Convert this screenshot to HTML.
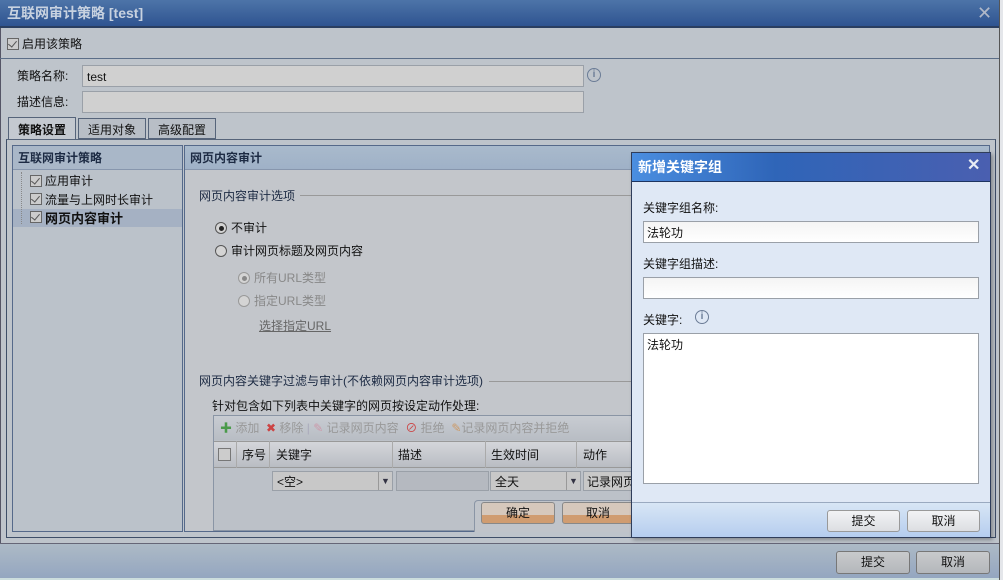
<!DOCTYPE html>
<html><head><meta charset="utf-8"><style>
*{box-sizing:border-box;margin:0;padding:0}
body{width:1003px;height:580px;overflow:hidden;background:#b8bec6;font-family:"Liberation Sans","Noto Sans CJK SC",sans-serif;font-size:12px;line-height:1.25;color:#111;position:relative}
.a{position:absolute}
.inp{position:absolute;background:#d0d0d0;border:1px solid #9aa0a8}
.cb{position:absolute;width:12px;height:12px;border:1px solid #666;background:#ccc}
.cb:after{content:"";position:absolute;left:2px;top:0px;width:4px;height:7px;border:solid #555;border-width:0 1.5px 1.5px 0;transform:rotate(40deg)}
.rad{position:absolute;width:12px;height:12px;border:1px solid #555;border-radius:50%;background:#d4d4d4}
.rad.on:after{content:"";position:absolute;left:2.5px;top:2.5px;width:5px;height:5px;border-radius:50%;background:#222}
.rad.dis{border-color:#999}.rad.dis.on:after{background:#888}
.btn{position:absolute;border:1px solid #888;border-radius:3px;text-align:center;line-height:20px;font-size:12px}
</style></head><body>
<div class="a" style="left:0;top:0;width:1000px;height:28px;background:linear-gradient(#4d74a8,#2f5491);border-bottom:2px solid #2a3e60"></div>
<div class="a" style="left:7px;top:5px;color:#c8d2e0;font-size:14px;font-weight:bold">互联网审计策略 [test]</div>
<div class="a" style="left:977px;top:2px;color:#b0b8c8;font-size:18px">✕</div>
<div class="a" style="left:999px;top:0;width:4px;height:580px;background:#e4e6ea;border-left:1px solid #555"></div>
<div class="a" style="left:0;top:28px;width:999px;height:515px;background:#bec4cb;border-left:1px solid #556"></div>
<div class="cb" style="left:7px;top:38px"></div>
<div class="a" style="left:22px;top:37px">启用该策略</div>
<div class="a" style="left:0;top:58px;width:999px;height:1px;background:#5c6e88"></div>
<div class="a" style="left:17px;top:69px">策略名称:</div>
<div class="inp" style="left:82px;top:65px;width:502px;height:22px;padding:4px 4px">test</div>
<div class="a" style="left:587px;top:68px;width:14px;height:14px;border:1.5px solid #6b7c96;border-radius:50%;color:#6b7c96;font-size:10px;font-weight:bold;text-align:center;line-height:11px">i</div>
<div class="a" style="left:17px;top:95px">描述信息:</div>
<div class="inp" style="left:82px;top:91px;width:502px;height:22px"></div>
<div class="a" style="left:8px;top:117px;width:68px;height:23px;border:1px solid #56647a;border-bottom:none;background:#c4c9d0;padding:5px 0 0 9px;font-weight:bold">策略设置</div>
<div class="a" style="left:78px;top:118px;width:68px;height:21px;border:1px solid #56647a;background:#b8bec6;padding:4px 0 0 9px">适用对象</div>
<div class="a" style="left:148px;top:118px;width:68px;height:21px;border:1px solid #56647a;background:#b8bec6;padding:4px 0 0 9px">高级配置</div>
<div class="a" style="left:6px;top:139px;width:990px;height:399px;border:1px solid #3e4e68;border-top-color:#56647a"></div>
<div class="a" style="left:12px;top:145px;width:171px;height:387px;border:1px solid #55698a;background:#bbc2ca"></div>
<div class="a" style="left:13px;top:146px;width:169px;height:24px;background:#a9b7c8;border-bottom:1px solid #8796ad;padding:5px 0 0 5px;font-weight:bold;color:#1d2b44">互联网审计策略</div>
<div class="a" style="left:13px;top:209px;width:169px;height:18px;background:#a5b1c3"></div>
<div class="a" style="left:21px;top:172px;height:52px;border-left:1px dotted #888"></div>
<div class="cb" style="left:30px;top:175px"></div><div class="a" style="left:45px;top:174px">应用审计</div>
<div class="cb" style="left:30px;top:193px"></div><div class="a" style="left:45px;top:193px">流量与上网时长审计</div>
<div class="cb" style="left:30px;top:211px"></div><div class="a" style="left:45px;top:211px;font-weight:bold;font-size:13px">网页内容审计</div>
<div class="a" style="left:184px;top:145px;width:806px;height:387px;border:1px solid #55698a;background:#c3c6cb"></div>
<div class="a" style="left:185px;top:146px;width:804px;height:24px;background:linear-gradient(#a9bacc,#9fb1c7);border-bottom:1px solid #8796ad;padding:5px 0 0 5px;font-weight:bold;color:#1d2b44">网页内容审计</div>
<div class="a" style="left:199px;top:189px;color:#1d2b44">网页内容审计选项</div>
<div class="a" style="left:300px;top:195px;width:340px;height:1px;background:#999"></div>
<div class="rad on" style="left:215px;top:222px"></div><div class="a" style="left:231px;top:221px">不审计</div>
<div class="rad" style="left:215px;top:245px"></div><div class="a" style="left:231px;top:244px">审计网页标题及网页内容</div>
<div class="rad on dis" style="left:238px;top:272px"></div><div class="a" style="left:254px;top:271px;color:#888">所有URL类型</div>
<div class="rad dis" style="left:238px;top:295px"></div><div class="a" style="left:254px;top:294px;color:#888">指定URL类型</div>
<div class="a" style="left:259px;top:319px;color:#666;text-decoration:underline">选择指定URL</div>
<div class="a" style="left:199px;top:374px;color:#1d2b44">网页内容关键字过滤与审计(不依赖网页内容审计选项)</div>
<div class="a" style="left:489px;top:381px;width:150px;height:1px;background:#999"></div>
<div class="a" style="left:212px;top:399px">针对包含如下列表中关键字的网页按设定动作处理:</div>
<div class="a" style="left:213px;top:415px;width:420px;height:116px;border:1px solid #8a95a5;background:#bcc1c8"></div>
<div class="a" style="left:214px;top:416px;width:419px;height:24px;background:linear-gradient(#c8ccd2,#b8bdc4);color:#999;padding:5px 0 0 6px;white-space:nowrap"><span style="color:#4a9a4a;font-weight:bold">✚</span> 添加 &nbsp;<span style="color:#c44">✖</span> 移除 <span style="color:#aab">|</span> <span style="color:#c9a">✎</span> 记录网页内容 &nbsp;<span style="color:#c44">⊘</span> 拒绝 &nbsp;<span style="color:#c96">✎</span>记录网页内容并拒绝</div>
<div class="a" style="left:214px;top:441px;width:419px;height:27px;background:linear-gradient(#d4d6da,#b9bdc3);border-top:1px solid #999;border-bottom:1px solid #999"></div>
<div class="a" style="left:218px;top:448px;width:13px;height:13px;border:1px solid #777;background:#ccc"></div>
<div class="a" style="left:236px;top:441px;height:27px;border-left:1px solid #aaa"></div>
<div class="a" style="left:242px;top:448px">序号</div>
<div class="a" style="left:269px;top:441px;height:27px;border-left:1px solid #aaa"></div>
<div class="a" style="left:276px;top:448px">关键字</div>
<div class="a" style="left:392px;top:441px;height:27px;border-left:1px solid #aaa"></div>
<div class="a" style="left:398px;top:448px">描述</div>
<div class="a" style="left:485px;top:441px;height:27px;border-left:1px solid #aaa"></div>
<div class="a" style="left:491px;top:448px">生效时间</div>
<div class="a" style="left:576px;top:441px;height:27px;border-left:1px solid #aaa"></div>
<div class="a" style="left:583px;top:448px">动作</div>
<div class="inp" style="left:272px;top:471px;width:121px;height:20px;background:#c8c8c8;padding:3px 4px">&lt;空&gt;</div>
<div class="a" style="left:378px;top:472px;width:14px;height:18px;border-left:1px solid #999;color:#334;font-size:9px;text-align:center;line-height:18px">▼</div>
<div class="inp" style="left:396px;top:471px;width:93px;height:20px;background:#b5b9c0"></div>
<div class="inp" style="left:490px;top:471px;width:91px;height:20px;background:#c8c8c8;padding:3px 4px">全天</div>
<div class="a" style="left:566px;top:472px;width:14px;height:18px;border-left:1px solid #999;color:#334;font-size:9px;text-align:center;line-height:18px">▼</div>
<div class="inp" style="left:583px;top:471px;width:50px;height:20px;background:#c8c8c8;padding:3px 3px;overflow:hidden;white-space:nowrap">记录网页</div>
<div class="a" style="left:474px;top:500px;width:160px;height:32px;border:1px solid #8a95a5;border-bottom:none;border-radius:4px 0 0 0;background:#c0c4ca"></div>
<div class="btn" style="left:481px;top:502px;width:74px;height:22px;background:linear-gradient(#d6c8bc 60%,#d09c70 60%)">确定</div>
<div class="btn" style="left:562px;top:502px;width:72px;height:22px;background:linear-gradient(#d6c8bc 60%,#d09c70 60%)">取消</div>
<div class="a" style="left:0;top:543px;width:999px;height:37px;background:linear-gradient(#adbac6,#94a6c0);border-top:1px solid #667;border-bottom:2px solid #cdd"></div>
<div class="btn" style="left:836px;top:551px;width:74px;height:23px;background:linear-gradient(#c8cacc,#b4b7bb);border-color:#777">提交</div>
<div class="btn" style="left:916px;top:551px;width:74px;height:23px;background:linear-gradient(#c8cacc,#b4b7bb);border-color:#777">取消</div>
<div class="a" style="left:631px;top:152px;width:360px;height:386px;background:#dfe8f5;border:1px solid #2f3d5a;box-shadow:2px 2px 4px rgba(0,0,0,.3)"></div>
<div class="a" style="left:632px;top:153px;width:358px;height:29px;background:linear-gradient(90deg,#4a8ee0,#2f65b8 40%,#4a5fb0);border-bottom:1px solid #1e3460;color:#fff;font-weight:bold;font-size:14px;padding:6px 0 0 6px">新增关键字组</div>
<div class="a" style="left:967px;top:156px;color:#e8ecf4;font-size:16px;font-weight:bold">✕</div>
<div class="a" style="left:643px;top:201px">关键字组名称:</div>
<div class="inp" style="left:643px;top:221px;width:336px;height:22px;background:linear-gradient(#f4f4f4,#fff);padding:4px 3px">法轮功</div>
<div class="a" style="left:643px;top:257px">关键字组描述:</div>
<div class="inp" style="left:643px;top:277px;width:336px;height:22px;background:linear-gradient(#f4f4f4,#fff)"></div>
<div class="a" style="left:643px;top:313px">关键字:</div>
<div class="a" style="left:695px;top:310px;width:14px;height:14px;border:1.5px solid #6b7c96;border-radius:50%;color:#6b7c96;font-size:10px;font-weight:bold;text-align:center;line-height:11px">i</div>
<div class="inp" style="left:643px;top:333px;width:336px;height:151px;background:#fff;padding:4px 3px">法轮功</div>
<div class="a" style="left:632px;top:502px;width:358px;height:35px;background:linear-gradient(#d8e6f5,#b5cdef);border-top:1px solid #9aaac0"></div>
<div class="btn" style="left:827px;top:510px;width:73px;height:22px;background:linear-gradient(#f2f3f5,#dcdee2);border-color:#999">提交</div>
<div class="btn" style="left:907px;top:510px;width:73px;height:22px;background:linear-gradient(#f2f3f5,#dcdee2);border-color:#999">取消</div>
</body></html>
